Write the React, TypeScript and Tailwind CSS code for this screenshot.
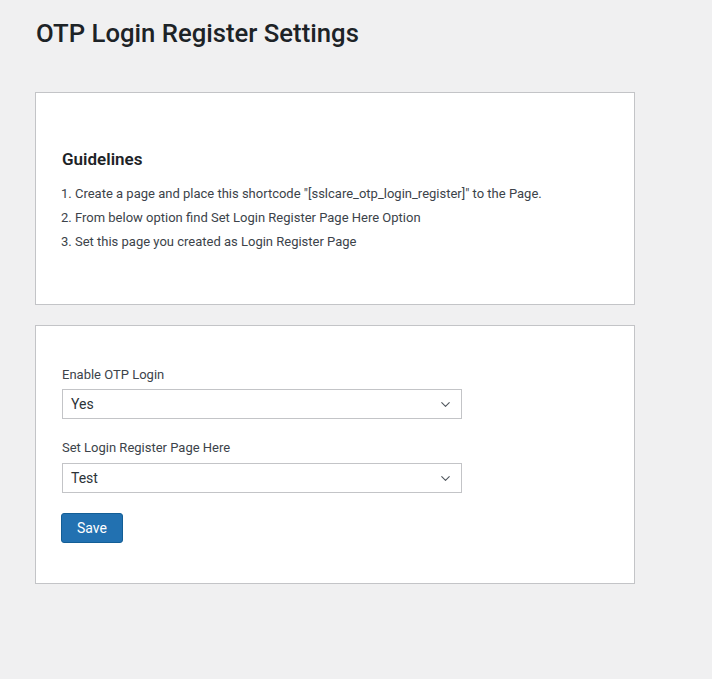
import { ChevronDown } from 'lucide-react';

const font = { fontFamily: 'Roboto, "Liberation Sans", sans-serif' };

function SelectField({ label, value, first }: { label: string; value: string; first?: boolean }) {
  return (
    <div>
      <p className={`text-[13px] text-[#3c434a] leading-[20px] ${first ? 'pt-px mb-[4px]' : 'mb-[5px]'}`}>{label}</p>
      <div className="w-[400px] h-[30px] border border-[#c3c4c7] bg-white flex items-center justify-between pl-[8px] pr-[8px]">
        <span className="text-[14px] text-[#2c3338]">{value}</span>
        <ChevronDown className="h-[15px] w-[15px] text-[#50575e]" strokeWidth={1.75} />
      </div>
    </div>
  );
}

export default function App() {
  return (
    <div className="min-h-[679px] bg-[#f0f0f1] pl-[35px] pt-[16px]" style={font}>
      {/* Header */}
      <h1 className="text-[25.7px] font-medium text-[#1d2327] leading-[34px] pl-px">OTP Login Register Settings</h1>

      {/* Guidelines */}
      <div className="mt-[42px] w-[600px] h-[213px] bg-white border border-[#c3c4c7] pt-[55px] px-[26px]">
        <h2 className="text-[17px] font-semibold text-[#1d2327] leading-[22px] mb-[14px]">Guidelines</h2>
        <div className="space-y-[4px] text-[13px] text-[#3c434a] leading-[20px] -ml-px">
          <p>1. Create a page and place this shortcode "[sslcare_otp_login_register]" to the Page.</p>
          <p>2. From below option find Set Login Register Page Here Option</p>
          <p>3. Set this page you created as Login Register Page</p>
        </div>
      </div>

      {/* Settings form */}
      <div className="mt-[20px] w-[600px] h-[259px] bg-white border border-[#c3c4c7] pt-[38px] px-[26px]">
        <div className="space-y-[19px]">
          <SelectField label="Enable OTP Login" value="Yes" first />
          <SelectField label="Set Login Register Page Here" value="Test" />
        </div>
        <button className="mt-[20px] -ml-px h-[30px] w-[62px] rounded-[3px] bg-[#2271b1] border border-[#135e96] text-white text-[14px]">
          Save
        </button>
      </div>
    </div>
  );
}
